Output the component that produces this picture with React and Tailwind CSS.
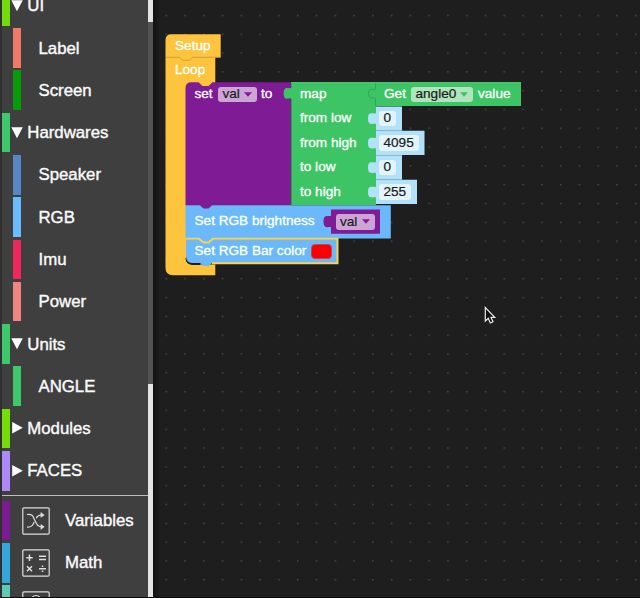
const treeRows = [
  { label: 'UI', bar: 'bg-[#73dd0c]', kind: 'open' },
  { label: 'Label', bar: 'bg-[#f07a68]', kind: 'leaf' },
  { label: 'Screen', bar: 'bg-[#079b07]', kind: 'leaf' },
  { label: 'Hardwares', bar: 'bg-[#3dc86b]', kind: 'open' },
  { label: 'Speaker', bar: 'bg-[#5688c7]', kind: 'leaf' },
  { label: 'RGB', bar: 'bg-[#6bbcfd]', kind: 'leaf' },
  { label: 'Imu', bar: 'bg-[#ee275f]', kind: 'leaf' },
  { label: 'Power', bar: 'bg-[#f08582]', kind: 'leaf' },
  { label: 'Units', bar: 'bg-[#3dc86b]', kind: 'open' },
  { label: 'ANGLE', bar: 'bg-[#3dc86b]', kind: 'leaf' },
  { label: 'Modules', bar: 'bg-[#76dc09]', kind: 'closed' },
  { label: 'FACES', bar: 'bg-[#ae87fb]', kind: 'closed' },
];

function TreeRow({ label, bar, kind }) {
  if (kind === 'leaf') {
    return (
      <div className="mb-[2.6px] ml-[11px] flex h-[39.7px] shrink-0 items-center">
        <div className={`h-full w-2 ${bar}`} />
        <span className="ml-[17.5px] pt-[2px]">{label}</span>
      </div>
    );
  }
  return (
    <div className="mb-[2.6px] flex h-[39.7px] shrink-0 items-center">
      <div className={`h-full w-[7.7px] ${bar}`} />
      <svg className="ml-[1.3px] h-3 w-3 shrink-0 fill-white" viewBox="0 0 12 12">
        <path d={kind === 'open' ? 'M0.3 .2H11.8L6 11.3Z' : 'M1.2 0V11.6L11.8 5.8Z'} />
      </svg>
      <span className="ml-[4.3px] pt-[2px]">{label}</span>
    </div>
  );
}

function IconBox({ children }) {
  return (
    <svg
      className="ml-3 h-7 w-7 shrink-0"
      viewBox="0 0 28 28"
      fill="none"
      stroke="#dedede"
      strokeWidth="1.2"
    >
      <rect x=".8" y=".8" width="26.4" height="26.4" rx="1.2" />
      {children}
    </svg>
  );
}

function ToolRow({ label, bar, children }) {
  return (
    <div className="mb-[2.6px] flex h-[39.7px] shrink-0 items-center">
      <div className={`h-full w-[7.7px] ${bar}`} />
      <IconBox>{children}</IconBox>
      <span className="ml-[15.3px] pt-[2px]">{label}</span>
    </div>
  );
}

function Sidebar() {
  return (
    <aside className="flex h-[597px] w-[153px] shrink-0 overflow-hidden bg-[#3f3f3f]">
      <div className="w-[2px] bg-[#303030]" />
      <div className="flex h-full w-[145.5px] flex-col overflow-hidden text-[16.8px] leading-none whitespace-nowrap text-[#fafafa] [-webkit-text-stroke:0.4px_#fafafa]">
        <div className="-mt-[14.2px] flex shrink-0 flex-col">
          {treeRows.map((row) => (
            <TreeRow key={row.label} {...row} />
          ))}
        </div>
        <div className="mt-[1.6px] mb-[4.4px] h-[1.5px] shrink-0 bg-[#bdbdbd]" />
        <ToolRow label="Variables" bar="bg-[#7c1a94]">
          <path d="M5 7.5C11 6.7 11 9.5 13 13.8S16 20 21 19.8M5 20C11 20.6 11 17 12.2 15M14.2 11.2C15.5 8.4 17 7.6 21 7.8" />
          <path d="M18.8 5.4L22.4 8L18.8 10.4ZM18.8 17.4L22.4 19.8L18.8 22.4Z" fill="#dedede" strokeWidth=".4" />
        </ToolRow>
        <ToolRow label="Math" bar="bg-[#33a6dc]">
          <path
            d="M4.3 8.8h6.4M7.5 5.6v6.4M17 7.3h7M17 10.5h7M5 17.2l5 5M10 17.2l-5 5M17 19.7h7M20.5 16.4v1.7M20.5 21.4v1.7"
            strokeWidth="1.5"
          />
        </ToolRow>
        <ToolRow label="" bar="bg-[#5dcab5]">
          <circle cx="14" cy="9.5" r="5" />
        </ToolRow>
      </div>
      <div className="flex w-[5.5px] flex-col justify-between bg-[#535353]">
        <div className="h-[22px] bg-[#e4e4e4]" />
        <div className="h-[213px] bg-[#e4e4e4]" />
      </div>
    </aside>
  );
}

function BlockShapes() {
  return (
    <svg className="absolute inset-0 h-[598px] w-[487px]" viewBox="153 0 487 598">
      <defs>
        <pattern id="grid" x="156.6" y="5.8" width="18.78" height="18.81" patternUnits="userSpaceOnUse">
          <rect x="9" y="9" width="1.3" height="1.3" fill="#565656" />
        </pattern>
        <linearGradient id="edge">
          <stop offset="0" stopColor="#101010" stopOpacity=".9" />
          <stop offset="1" stopColor="#101010" stopOpacity="0" />
        </linearGradient>
      </defs>
      <rect x="153" width="487" height="598" fill="url(#grid)" />
      <rect x="153" width="7" height="598" fill="url(#edge)" />

      <path
        fill="#fec43d"
        d="M165.5 40Q165.5 34.2 171.5 34.2H220.7V57.5H215.3V82.5L211 88H192L186 94V258Q186 264.5 193 264.5H215.3V275.3H173Q165.5 275.3 165.5 268Z"
      />
      <path
        d="M166 57.3H179.5L182.5 60.3H189.5L192.5 57.3H220.5"
        fill="none"
        stroke="#c29842"
        strokeWidth=".8"
      />

      <path
        d="M186 258Q186.5 264.3 193 264.3H200"
        fill="none"
        stroke="#1c1c1c"
        strokeWidth="1.2"
      />
      <path
        fill="#801b96"
        d="M185.5 88Q185.5 82.2 191.5 82.2H198.5L202.5 86H208.5L212.5 82.2H292V205.5H185.5Z"
      />
      <path
        fill="#3dc565"
        d="M291 82.3H521V106H376V205H291V98.5C289.5 97 283.7 102 283.7 93.5S289.5 89.5 291 88Z"
      />
      <path d="M291 82.5V87.5M291 99V205" fill="none" stroke="#3c4a53" strokeWidth=".8" />
      <path
        d="M375.5 82.5V89.2C374 91 368.5 86.5 368.5 93.5S374 96.5 375.5 98.5V106"
        fill="none"
        stroke="#35a65b"
        strokeWidth="1"
      />
      <path d="M291 82.6H521" stroke="#57d17c" strokeWidth=".8" />

      <g fill="#b2e1fa">
        <path d="M376 106.5H402V130.5H376V124C374 122.5 368 127 368 118.5S374 115 376 113Z" />
        <path d="M376 130.8H424.5V155H376V148.5C374 147 368 151.5 368 143S374 139.5 376 137.5Z" />
        <path d="M376 155.2H402V179.5H376V173C374 171.5 368 176 368 167.5S374 164 376 162Z" />
        <path d="M376 179.7H417V204H376V197.5C374 196 368 200.5 368 192S374 188.5 376 186.5Z" />
      </g>
      <path d="M402.3 130.6H376M402.3 155.2H376M402.3 179.7H376" stroke="#9bc9df" strokeWidth=".6" />

      <path
        fill="#6bb9fb"
        d="M185.5 205.2H390.8V238.5H213L209 242.6H203L199 238.5H185.5Z"
      />
      <path fill="#801b96" d="M199 204.5H213L208.5 208.5H203.5Z" />
      <path
        fill="#801b96"
        d="M331 209.5H380V233.8H331V227.5C329.5 226 323.5 230 323.5 221.5S329.5 217.5 331 215.5Z"
      />
      <path
        fill="#6bb9fb"
        d="M186 239.2H200L203.5 242.5H208.5L212 239.2H337V263H212L208.5 266H203.5L200 263H192Q186 262.5 186 256Z"
      />
      <path
        d="M185.5 238.7H199L203.5 242.6H208.5L213 238.7H337.5V263.3H212"
        fill="none"
        stroke="#fcd15a"
        strokeWidth="2"
      />
    </svg>
  );
}

function Text({ at, children }) {
  return (
    <span
      className={`absolute h-5 leading-5 whitespace-nowrap text-[#fbfffb] [-webkit-text-stroke:0.35px_#fbfffb] ${at}`}
    >
      {children}
    </span>
  );
}

function Field({ at, children }) {
  return (
    <span
      className={`absolute flex h-[15.5px] items-center rounded-[3px] pl-[4.5px] whitespace-nowrap text-[#1b1b1b] [-webkit-text-stroke:0.2px_#1b1b1b] ${at}`}
    >
      {children}
    </span>
  );
}

function Caret({ color }) {
  return (
    <svg className={`absolute right-[5px] h-[5px] w-2 ${color}`} viewBox="0 0 8 5">
      <path d="M0 .3H8L4 4.8Z" />
    </svg>
  );
}

function Workspace() {
  return (
    <main className="relative h-[597px] flex-1 overflow-hidden bg-[#1e1e1e] text-[13.6px]">
      <BlockShapes />
      <Text at="left-[22px] top-[36px]">Setup</Text>
      <Text at="left-[22px] top-[60px]">Loop</Text>
      <Text at="left-[41.5px] top-[84px]">set</Text>
      <Field at="left-[65px] top-[86.5px] w-[38.5px] bg-[#cca5d6]">
        val <Caret color="fill-[#801b96]" />
      </Field>
      <Text at="left-[108px] top-[84px]">to</Text>
      <Text at="left-[147px] top-[84px]">map</Text>
      <Text at="left-[147px] top-[108px]">from low</Text>
      <Text at="left-[147px] top-[133px]">from high</Text>
      <Text at="left-[147px] top-[157px]">to low</Text>
      <Text at="left-[147px] top-[182px]">to high</Text>
      <Text at="left-[231px] top-[84px]">Get</Text>
      <Field at="left-[258px] top-[86.5px] w-[62px] bg-[#aee5bd]">
        angle0 <Caret color="fill-[#45bd68]" />
      </Field>
      <Text at="left-[325px] top-[84px]">value</Text>
      <Field at="left-[226px] top-[110.5px] w-[17px] bg-[#e3f4fd]">0</Field>
      <Field at="left-[226px] top-[135px] w-[39.5px] bg-[#e3f4fd]">4095</Field>
      <Field at="left-[226px] top-[159.5px] w-[17px] bg-[#e3f4fd]">0</Field>
      <Field at="left-[226px] top-[184px] w-[32px] bg-[#e3f4fd]">255</Field>
      <Text at="left-[41.5px] top-[211px]">Set RGB brightness</Text>
      <Field at="left-[182.5px] top-[214px] w-[39px] bg-[#cca5d6]">
        val <Caret color="fill-[#801b96]" />
      </Field>
      <Text at="left-[41.5px] top-[241px]">Set RGB Bar color</Text>
      <div className="absolute left-[158px] top-[243.5px] h-[15px] w-[21px] rounded-[4px] border border-[#d44040] bg-[#fb0000]" />
      <svg className="absolute left-[331px] top-[306px] h-[19px] w-[12px]" viewBox="0 0 12 19">
        <path
          d="M1.3 1.5V15L4.3 12.2L6.3 17L9 15.8L7 11.3H10.8Z"
          fill="#111"
          stroke="#e8e8e8"
          strokeWidth="1.2"
        />
      </svg>
    </main>
  );
}

export default function App() {
  return (
    <div className="flex h-[598px] w-[640px] overflow-hidden bg-[#080808] font-['Liberation_Sans',Arial,sans-serif]">
      <Sidebar />
      <Workspace />
    </div>
  );
}
